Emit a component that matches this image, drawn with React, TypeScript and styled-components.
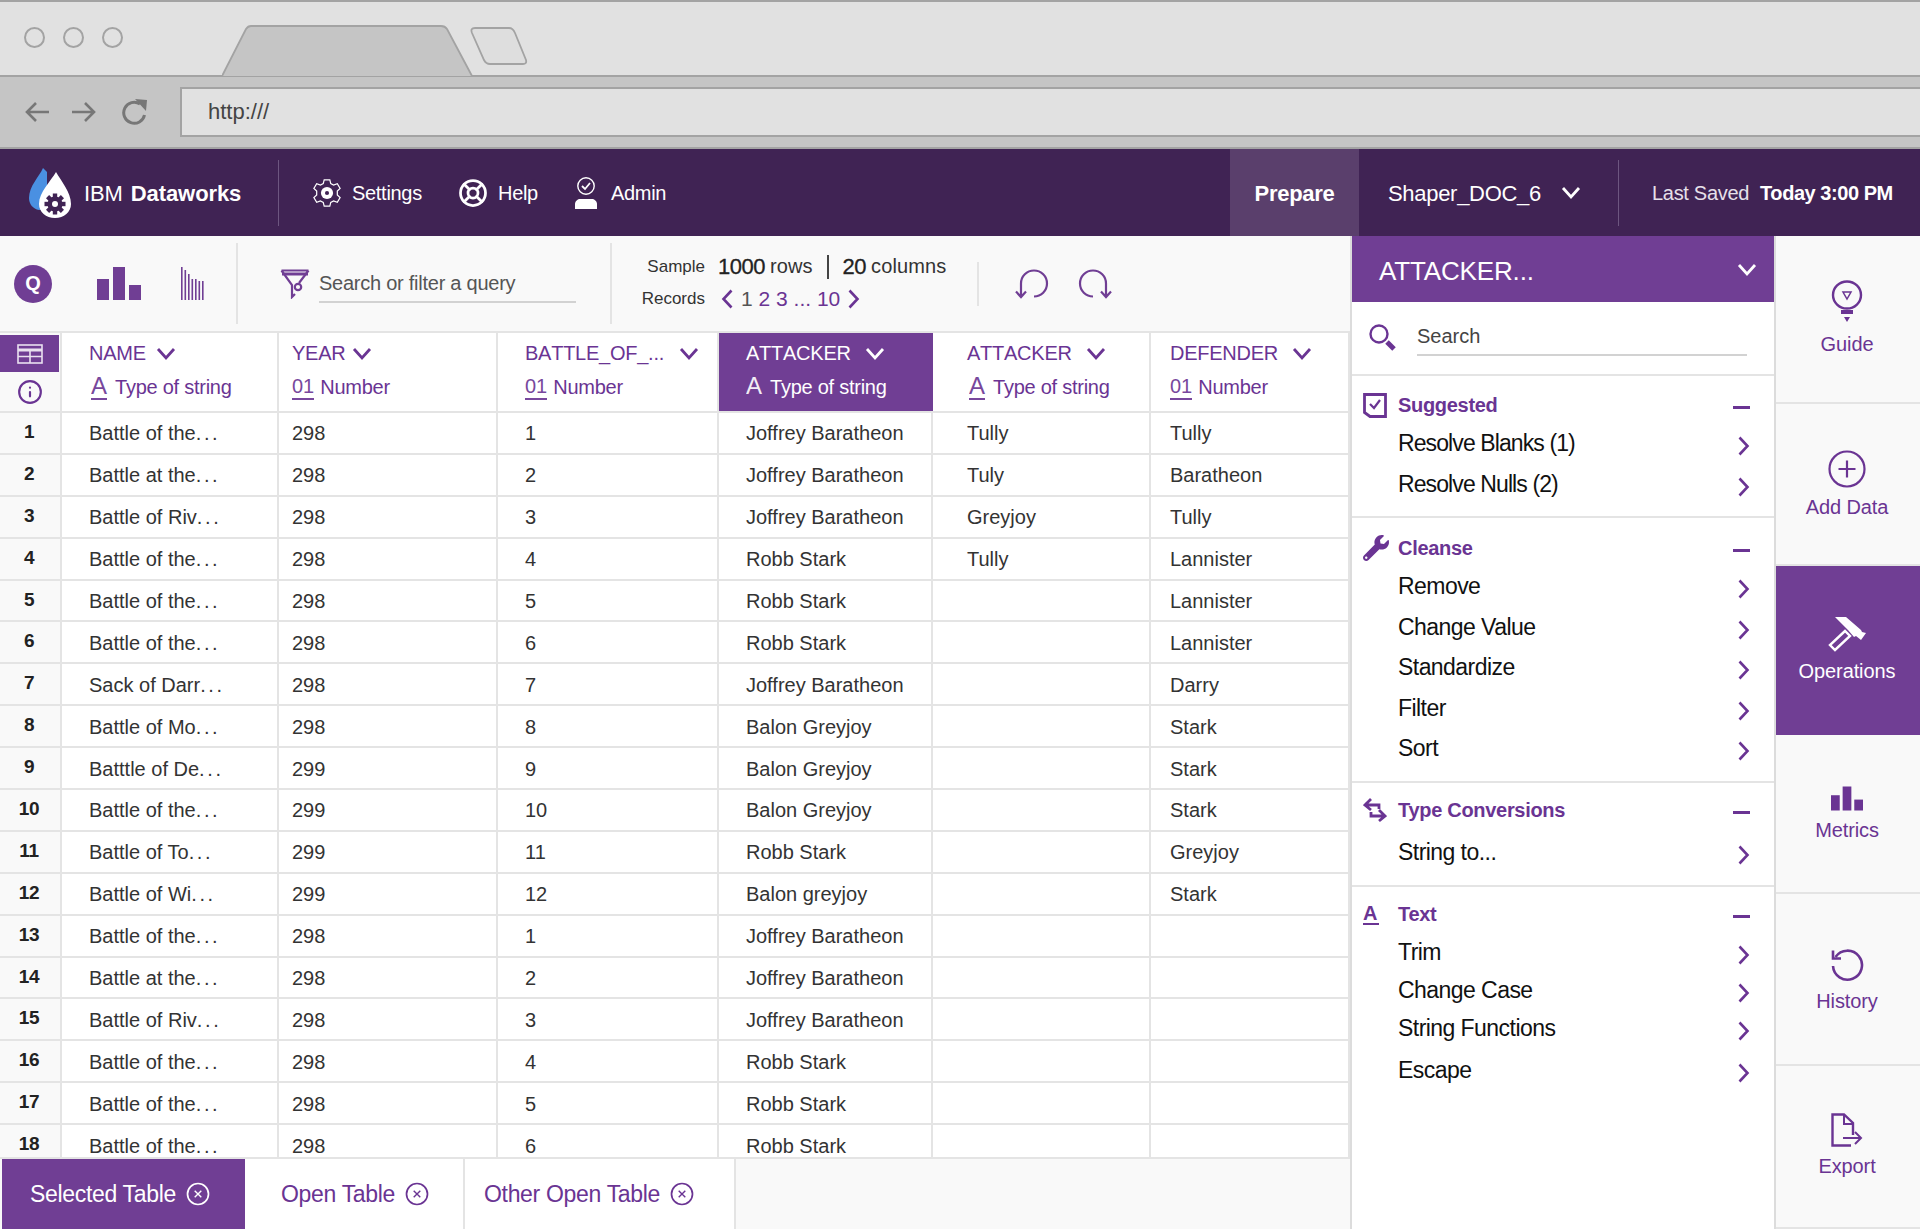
import React from 'react';
import styled, { createGlobalStyle } from 'styled-components';
import { Info, LifeBuoy } from 'lucide-react';
import { FaWrench } from 'react-icons/fa';

const PURPLE = '#703e94';
const INK = '#6a3493';
const LINE = '#e4e4e4';

const GlobalStyle = createGlobalStyle`
    html, body {
        margin: 0;
        padding: 0;
        background: #fff;
    }
    * {
        box-sizing: border-box;
    }
    #root {
        font-family: "Liberation Sans", Arial, sans-serif;
    }
`;

const Page = styled.div`
    width: 1920px;
    height: 1229px;
    display: flex;
    flex-direction: column;
    overflow: hidden;
`;

/* browser chrome */
const TabStrip = styled.div`
    height: 77px;
    flex: none;
    display: flex;
    align-items: flex-end;
    background: #e1e1e1;
    border-top: 2px solid #a3a3a3;
    border-bottom: 2px solid #a3a3a3;
`;

const Lights = styled.div`
    display: flex;
    gap: 18px;
    padding: 0 0 27px 24px;
    width: 222px;
`;

const Light = styled.span`
    width: 21px;
    height: 21px;
    border-radius: 50%;
    border: 2px solid #a3a3a3;
`;

const AddressBar = styled.div`
    height: 72px;
    flex: none;
    display: flex;
    align-items: center;
    background: #c5c5c5;
    border-bottom: 2px solid #a3a3a3;
    color: #777;
`;

const NavIcons = styled.div`
    width: 180px;
    padding: 0 0 0 25px;
    display: flex;
    gap: 23px;
    align-items: center;
`;

const UrlField = styled.div`
    flex: 1;
    height: 50px;
    padding-left: 26px;
    display: flex;
    align-items: center;
    background: #e1e1e1;
    border: 2px solid #a3a3a3;
    border-right: none;
    color: #444;
    font-size: 22px;
`;

/* app header */
const Header = styled.header`
    height: 87px;
    flex: none;
    display: flex;
    align-items: center;
    background: #402354;
    color: #fff;
    font-size: 20px;
    letter-spacing: -0.3px;
`;

const HeaderLabel = styled.span`
    padding-top: 2px;
`;

const Brand = styled.div`
    width: 278px;
    padding-left: 28px;
    display: flex;
    align-items: center;
    gap: 12px;
    font-size: 22px;
    letter-spacing: -0.1px;
    b {
        margin-left: 2px;
    }
`;

const VRule = styled.span`
    align-self: center;
    width: 1px;
    height: 66px;
    background: #6d5680;
`;

const NavItem = styled.div<{ $w: number; $gap: number }>`
    width: ${(p) => p.$w}px;
    display: flex;
    align-items: center;
    gap: ${(p) => p.$gap}px;
`;

const NavGroup = styled.nav`
    display: flex;
    padding-left: 33px;
    flex: 1;
`;

const Prepare = styled.div`
    width: 129px;
    align-self: stretch;
    padding-top: 2px;
    display: flex;
    align-items: center;
    justify-content: center;
    background: #5a3f6c;
    font-weight: bold;
    font-size: 22px;
`;

const DocName = styled.div`
    width: 259px;
    padding-left: 29px;
    display: flex;
    align-items: center;
    gap: 20px;
    font-size: 22px;
`;

const Saved = styled.div`
    width: 301px;
    padding: 2px 0 0 33px;
    display: flex;
    gap: 11px;
    color: #e6e0ea;
    b {
        color: #fff;
        letter-spacing: -0.45px;
    }
`;

/* body */
const Body = styled.div`
    flex: 1;
    min-height: 0;
    display: flex;
`;

const Main = styled.main`
    width: 1352px;
    display: flex;
    flex-direction: column;
    border-right: 2px solid #dcdcdc;
`;

const Toolbar = styled.div`
    height: 97px;
    flex: none;
    display: flex;
    align-items: center;
    background: #f9f9f9;
    border-bottom: 2px solid ${LINE};
`;

const ViewIcons = styled.div`
    width: 238px;
    height: 81px;
    padding-left: 14px;
    display: flex;
    align-items: center;
    border-right: 2px solid ${LINE};
`;

const QBadge = styled.span`
    width: 38px;
    height: 38px;
    border-radius: 50%;
    display: flex;
    align-items: center;
    justify-content: center;
    background: ${PURPLE};
    color: #fff;
    font-weight: bold;
    font-size: 20px;
    margin-right: 45px;
`;

const QueryBox = styled.div`
    width: 374px;
    height: 81px;
    padding: 0 34px 0 42px;
    display: flex;
    align-items: center;
    gap: 9px;
    border-right: 2px solid ${LINE};
`;

const QueryText = styled.div`
    flex: 1;
    height: 36px;
    padding-top: 5px;
    margin-top: 3px;
    border-bottom: 2px solid #d2d2d2;
    color: #555;
    font-size: 20px;
    letter-spacing: -0.25px;
`;

const Stats = styled.div`
    width: 365px;
    padding-left: 29px;
    margin-top: -2px;
    display: flex;
    flex-direction: column;
    gap: 8px;
    color: #333;
`;

const StatRow = styled.div`
    display: flex;
    align-items: center;
    height: 24px;
    font-size: 20px;
    letter-spacing: 0.1px;
    white-space: pre;
`;

const StatLabel = styled.span`
    width: 64px;
    margin-right: 13px;
    text-align: right;
    font-size: 17px;
    letter-spacing: 0;
`;

const Strong = styled.span`
    font-size: 22px;
    color: #222;
    margin-right: 5px;
    letter-spacing: -0.5px;
    -webkit-text-stroke: 0.3px #222;
`;

const Sep = styled.span`
    width: 2px;
    height: 24px;
    margin: 0 14px;
    background: #444;
`;

const PagerNav = styled.span`
    margin-left: 3px;
    display: flex;
    align-items: center;
`;

const Pager = styled.span`
    margin: 0 7px;
    color: ${INK};
    font-size: 21px;
    letter-spacing: 0;
    i {
        font-style: normal;
        color: #555;
    }
`;

const HistoryIcons = styled.div`
    height: 44px;
    padding-left: 35px;
    display: flex;
    align-items: center;
    gap: 27px;
    border-left: 2px solid ${LINE};
`;

/* data grid */
const GridArea = styled.div`
    flex: 1;
    min-height: 0;
    overflow: hidden;
`;

const COLS = '62px 217px 219px 221px 214px 218px 1fr';

const HeadRow = styled.div`
    height: 80px;
    display: grid;
    grid-template-columns: ${COLS};
    border-bottom: 2px solid ${LINE};
`;

const CornerCell = styled.div`
    display: flex;
    flex-direction: column;
    background: #f9f9f9;
    border-right: 2px solid ${LINE};
`;

const CornerTop = styled.div`
    width: 59px;
    height: 37px;
    margin-top: 2px;
    display: flex;
    align-items: center;
    justify-content: center;
    background: ${PURPLE};
`;

const CornerInfo = styled.div`
    flex: 1;
    display: flex;
    align-items: center;
    justify-content: center;
    color: ${INK};
`;

const HeadCell = styled.div<{ $on?: boolean; $x: number }>`
    padding: 8px 0 0 ${(p) => p.$x}px;
    background: ${(p) => (p.$on ? PURPLE : '#fff')};
    color: ${(p) => (p.$on ? '#fff' : INK)};
    border-right: ${(p) => (p.$on ? 'none' : `2px solid ${LINE}`)};
`;

const HeadTitle = styled.div<{ $gap: number }>`
    height: 24px;
    display: flex;
    align-items: center;
    gap: ${(p) => p.$gap}px;
    font-size: 20px;
    font-kerning: none;
    letter-spacing: -0.25px;
    white-space: nowrap;
`;

const HeadType = styled.div`
    height: 30px;
    margin-top: 7px;
    display: flex;
    align-items: center;
    font-size: 20px;
    letter-spacing: -0.25px;
    white-space: nowrap;
`;

const TypeMark = styled.span<{ $plain?: boolean; $letter?: boolean }>`
    margin: 0 ${(p) => (p.$letter ? 8 : 6)}px 0 ${(p) => (p.$letter && !p.$plain ? 2 : 0)}px;
    font-size: ${(p) => (p.$letter ? 24 : 20)}px;
    line-height: 24px;
    letter-spacing: 0;
    opacity: 0.9;
    border-bottom: 2px solid ${(p) => (p.$plain ? 'transparent' : 'currentColor')};
`;

const TextMark = styled.span`
    display: block;
    width: 16px;
    border-bottom: 2px solid ${INK};
    color: ${INK};
    font-size: 20px;
    font-weight: bold;
    line-height: 20px;
`;

const Row = styled.div`
    height: 41.9px;
    display: grid;
    grid-template-columns: ${COLS};
    border-bottom: 2px solid ${LINE};
`;

const RowNum = styled.div`
    padding: 0 2px 2px 0;
    display: flex;
    align-items: center;
    justify-content: center;
    background: #f9f9f9;
    border-right: 2px solid ${LINE};
    color: #222;
    font-weight: bold;
    font-size: 19px;
    letter-spacing: -0.4px;
`;

const Cell = styled.div<{ $x: number }>`
    padding: 2px 0 0 ${(p) => p.$x}px;
    display: flex;
    align-items: center;
    border-right: 2px solid ${LINE};
    color: #333;
    font-size: 20px;
    white-space: pre;
    overflow: hidden;
`;

const Dots = styled.span`
    letter-spacing: 2.6px;
`;

/* bottom tabs */
const TabsBar = styled.div`
    height: 72px;
    flex: none;
    display: flex;
    background: #f9f9f9;
    border-top: 2px solid ${LINE};
`;

const TableTab = styled.div<{ $w: number; $x: number; $on?: boolean }>`
    width: ${(p) => p.$w}px;
    padding-left: ${(p) => p.$x}px;
    display: flex;
    align-items: center;
    gap: 10px;
    background: ${(p) => (p.$on ? PURPLE : '#fff')};
    color: ${(p) => (p.$on ? '#fff' : INK)};
    border-right: ${(p) => (p.$on ? 'none' : `2px solid ${LINE}`)};
    font-size: 23px;
    letter-spacing: -0.32px;
    margin-left: ${(p) => (p.$on ? '2px' : '0')};
`;

/* operations panel */
const Panel = styled.aside`
    width: 424px;
    flex: none;
    display: flex;
    flex-direction: column;
    background: #fff;
    border-right: 2px solid #dcdcdc;
`;

const PanelHead = styled.div`
    height: 66px;
    flex: none;
    padding: 0 17px 0 27px;
    display: flex;
    align-items: center;
    justify-content: space-between;
    background: ${PURPLE};
    color: #fff;
    font-size: 26px;
    letter-spacing: -0.15px;
`;

const PanelTitle = styled.span`
    margin-top: 5px;
`;

const PanelSearch = styled.div`
    height: 74px;
    flex: none;
    padding: 0 27px 0 17px;
    display: flex;
    align-items: center;
    gap: 21px;
    border-bottom: 2px solid ${LINE};
    color: ${INK};
`;

const PanelSearchText = styled.div`
    flex: 1;
    height: 36px;
    padding-top: 5px;
    border-bottom: 2px solid #d2d2d2;
    color: #444;
    font-size: 20px;
`;

const Section = styled.section<{ $top: number; $gap: number; $line?: boolean }>`
    padding: ${(p) => p.$top}px 0 12px 0;
    border-bottom: ${(p) => (p.$line ? `2px solid ${LINE}` : 'none')};
    & > div:nth-child(2) {
        margin-top: ${(p) => p.$gap}px;
    }
`;

const SectionHead = styled.div`
    height: 30px;
    padding: 0 24px 0 11px;
    display: flex;
    align-items: center;
    color: ${INK};
    font-weight: bold;
    font-size: 20px;
    letter-spacing: -0.3px;
`;

const SectionIcon = styled.span`
    width: 35px;
    display: flex;
    align-items: center;
`;

const SectionName = styled.span`
    flex: 1;
`;

const Minus = styled.span`
    width: 17px;
    height: 3px;
    margin-top: 4px;
    background: ${INK};
`;

const Item = styled.div<{ $h: number; $tight?: boolean }>`
    height: ${(p) => p.$h}px;
    padding: 0 24px 0 46px;
    display: flex;
    align-items: center;
    justify-content: space-between;
    color: #111;
    font-size: 23px;
    letter-spacing: ${(p) => (p.$tight ? -0.9 : -0.55)}px;
    svg {
        margin-top: 5px;
    }
`;

/* right rail */
const Rail = styled.nav`
    flex: 1;
    display: flex;
    flex-direction: column;
    background: #f9f9f9;
`;

const RailItem = styled.div<{ $h: number; $pad: number; $gap: number; $on?: boolean }>`
    height: ${(p) => p.$h}px;
    flex: none;
    padding: ${(p) => p.$pad}px 2px 0 0;
    display: flex;
    flex-direction: column;
    align-items: center;
    gap: ${(p) => p.$gap}px;
    background: ${(p) => (p.$on ? PURPLE : 'transparent')};
    color: ${(p) => (p.$on ? '#fff' : INK)};
    border-bottom: 2px solid ${(p) => (p.$on ? PURPLE : LINE)};
    font-size: 20px;
    letter-spacing: -0.1px;
`;

function ChevronDown({ color = 'currentColor' }: { color?: string }) {
    return (
        <svg width="20" height="15" viewBox="0 0 20 15" fill="none" stroke={color} strokeWidth="2.8" style={{ flex: 'none' }}>
            <path d="M2 3l8 9 8-9" />
        </svg>
    );
}

function ChevronSide({ dir, color = INK }: { dir: 'left' | 'right'; color?: string }) {
    return (
        <svg width="13" height="20" viewBox="0 0 13 20" fill="none" stroke={color} strokeWidth="2.6" style={{ flex: 'none' }}>
            <path d={dir === 'right' ? 'M2.5 1.5l8 8.5-8 8.5' : 'M10.5 1.5l-8 8.5 8 8.5'} />
        </svg>
    );
}

function BarsIcon({ w = 44, h = 33, color = PURPLE }: { w?: number; h?: number; color?: string }) {
    return (
        <svg width={w} height={h} viewBox="0 0 44 33" fill={color}>
            <rect x="0" y="12" width="12" height="21" />
            <rect x="16" y="0" width="12" height="33" />
            <rect x="32" y="18" width="12" height="15" />
        </svg>
    );
}

function ThinBars() {
    return (
        <svg width="24" height="33" viewBox="0 0 24 33" fill={PURPLE} style={{ marginLeft: 40 }}>
            {[[0, 0], [3.5, 3], [7, 7], [10.5, 12], [14, 12], [17.5, 14], [21, 14]].map(([x, y]) => (
                <rect key={x} x={x} y={y} width="1.6" height={33 - y} />
            ))}
        </svg>
    );
}

function FunnelIcon() {
    return (
        <svg width="30" height="30" viewBox="0 0 30 30" fill="none" stroke={PURPLE} strokeWidth="2.2" style={{ flex: 'none' }}>
            <path d="M1.5 1.5h27M1.5 1.5L12 16v12l3-3M28.5 1.5L19 14" />
            <path d="M2 5h26" strokeWidth="3" />
            <circle cx="18" cy="18" r="3.2" />
        </svg>
    );
}

function TurnIcon({ flip }: { flip?: boolean }) {
    return (
        <svg width="36" height="32" viewBox="0 0 36 32" fill="none" stroke={PURPLE} strokeWidth="2.2" style={flip ? { transform: 'scaleX(-1)' } : undefined}>
            <path d="M20 28.5A13 13 0 1 0 7 15.5V29M2 23.5L7 29l5-5.5" />
        </svg>
    );
}

function ArrowIcon({ flip }: { flip?: boolean }) {
    return (
        <svg width="24" height="22" viewBox="0 0 24 22" fill="none" stroke="#777" strokeWidth="2.6" style={flip ? { transform: 'scaleX(-1)' } : undefined}>
            <path d="M24 11H3M11 2l-9 9 9 9" />
        </svg>
    );
}

function ReloadIcon() {
    return (
        <svg width="26" height="26" viewBox="0 0 26 26" fill="none" stroke="#777" strokeWidth="3" style={{ marginLeft: 3 }}>
            <path d="M22.5 16A10.5 10.5 0 1 1 18 5" />
            <path d="M13 0l12 1-1 11z" fill="#777" stroke="none" />
        </svg>
    );
}

function LogoIcon() {
    return (
        <svg width="44" height="50" viewBox="0 0 44 50">
            <path d="M15 0C11 9 1 18 1 30c0 6 4 11 10 12 4 0 8-4 8-8V4z" fill="#4a90e2" />
            <path d="M28 4c-5 9-17 20-17 32 0 8 7 14 16 14s16-6 16-14C43 24 33 13 28 4z" fill="#fff" />
            <g fill="#402354">
                <circle cx="27" cy="36" r="7.5" />
                {[0, 45, 90, 135].map((a) => (
                    <rect key={a} x="24.8" y="25.5" width="4.4" height="21" transform={`rotate(${a} 27 36)`} />
                ))}
            </g>
            <circle cx="27" cy="36" r="3" fill="#fff" />
        </svg>
    );
}

function GearIcon() {
    return (
        <svg width="30" height="32" viewBox="0 0 32 32" fill="none" stroke="#fff" strokeWidth="1.3">
            <path d="M13 2h6l1 4 3 1.5 4-1.5 3 5-3 3v4l3 3-3 5-4-1.5-3 1.5-1 4h-6l-1-4-3-1.5-4 1.5-3-5 3-3v-4l-3-3 3-5 4 1.5L12 6z" />
            <circle cx="16" cy="16" r="6.5" fill="#fff" stroke="none" />
            <circle cx="16" cy="16" r="2.2" fill="#402354" stroke="none" />
        </svg>
    );
}

function AdminIcon() {
    return (
        <svg width="26" height="32" viewBox="0 0 26 32" fill="none" stroke="#fff" strokeWidth="1.4">
            <circle cx="13" cy="9" r="8.2" />
            <path d="M9 9l3 3 5-6" strokeWidth="1.8" />
            <path d="M2 32v-5c0-3 3-5 5-5h12c2 0 5 2 5 5v5z" fill="#fff" stroke="none" />
        </svg>
    );
}

function GridIcon() {
    return (
        <svg width="26" height="20" viewBox="0 0 26 20" fill="none" stroke="#e9e0ef" strokeWidth="1.6">
            <rect x="1" y="1" width="24" height="18" />
            <path d="M1 6h24" strokeWidth="3" />
            <path d="M1 12.5h24M13 6v13" />
        </svg>
    );
}

function SmallClose({ color }: { color: string }) {
    return (
        <svg width="24" height="24" viewBox="0 0 24 24" fill="none" stroke={color} strokeWidth="1.7" style={{ flex: 'none' }}>
            <circle cx="12" cy="12" r="10.5" />
            <path d="M8.7 8.7l6.6 6.6M15.3 8.7l-6.6 6.6" strokeWidth="1.4" />
        </svg>
    );
}

function LensIcon() {
    return (
        <svg width="27" height="28" viewBox="0 0 27 28" fill="none" stroke={INK} strokeWidth="2.4" style={{ flex: 'none' }}>
            <circle cx="10" cy="10" r="8.5" />
            <path d="M18 18l7 7" strokeWidth="5" />
        </svg>
    );
}

function CheckBoxIcon() {
    return (
        <svg width="24" height="25" viewBox="0 0 24 25" fill="none" stroke={INK} strokeWidth="2.8">
            <path d="M1.5 1.5h21v22H7l-5.5-4z" />
            <path d="M7 11l4 4 6-8" strokeWidth="2.2" />
        </svg>
    );
}

function SwapIcon() {
    return (
        <svg width="24" height="26" viewBox="0 0 24 26" fill="none" stroke={INK} strokeWidth="2.8">
            <path d="M8 2L2 8l6 5M2 8h14v4" />
            <path d="M16 13l6 6-6 5M22 19H8v-4" />
        </svg>
    );
}

function BulbIcon() {
    return (
        <svg width="32" height="43" viewBox="0 0 32 43" fill="none" stroke={INK} strokeWidth="2.4">
            <ellipse cx="16" cy="15" rx="14" ry="13.5" />
            <path d="M12 12h8l-4 7z" strokeWidth="1.5" />
            <path d="M10 30h12v4H10zM13 37h6l-3 5z" fill={INK} stroke="none" />
        </svg>
    );
}

function PlusCircleIcon() {
    return (
        <svg width="38" height="38" viewBox="0 0 38 38" fill="none" stroke={INK} strokeWidth="2.2">
            <circle cx="19" cy="19" r="17.5" />
            <path d="M19 10.5v17M10.5 19h17" />
        </svg>
    );
}

function HammerIcon() {
    return (
        <svg width="38" height="35" viewBox="0 0 38 35" fill="none">
            <path d="M6 0h11l15 13 1 2 4 1-5 7-5-4-2 1-6-7z" transform="translate(1 0)" fill="#fff" />
            <path d="M17 14L2 28l5 5 15-14z" stroke="#fff" strokeWidth="2.4" />
        </svg>
    );
}

function HistoryIcon() {
    return (
        <svg width="34" height="34" viewBox="0 0 34 34" fill="none" stroke={INK} strokeWidth="2.6">
            <path d="M5.5 9A14.5 14.5 0 1 1 3 18" />
            <path d="M3 2.5v8h8" />
        </svg>
    );
}

function ExportIcon() {
    return (
        <svg width="32" height="34" viewBox="0 0 32 34" fill="none" stroke={INK} strokeWidth="2.4">
            <path d="M22 22V10L13 1.5H1.5v31H20" />
            <path d="M13 1.5V11h9" strokeWidth="2" />
            <path d="M12 25h17M24 19l6 6-6 6" strokeWidth="2" />
        </svg>
    );
}

const columns = [
    { name: 'NAME', type: 'A', sub: 'Type of string', x: 27, gap: 10 },
    { name: 'YEAR', type: '01', sub: 'Number', x: 13, gap: 7 },
    { name: 'BATTLE_OF_...', type: '01', sub: 'Number', x: 27, gap: 15 },
    { name: 'ATTACKER', type: 'A', sub: 'Type of string', x: 27, gap: 14, on: true },
    { name: 'ATTACKER', type: 'A', sub: 'Type of string', x: 34, gap: 14 },
    { name: 'DEFENDER', type: '01', sub: 'Number', x: 19, gap: 14 },
];

const rows = [
    ['Battle of the...', '298', '1', 'Joffrey Baratheon', 'Tully', 'Tully'],
    ['Battle at the...', '298', '2', 'Joffrey Baratheon', 'Tuly', 'Baratheon'],
    ['Battle of Riv...', '298', '3', 'Joffrey Baratheon', 'Greyjoy', 'Tully'],
    ['Battle of the...', '298', '4', 'Robb Stark', 'Tully', 'Lannister'],
    ['Battle of the...', '298', '5', 'Robb Stark', '', 'Lannister'],
    ['Battle of the...', '298', '6', 'Robb Stark', '', 'Lannister'],
    ['Sack of Darr...', '298', '7', 'Joffrey Baratheon', '', 'Darry'],
    ['Battle of Mo...', '298', '8', 'Balon Greyjoy', '', 'Stark'],
    ['Batttle of De...', '299', '9', 'Balon Greyjoy', '', 'Stark'],
    ['Battle of the...', '299', '10', 'Balon Greyjoy', '', 'Stark'],
    ['Battle of To...', '299', '11', 'Robb Stark', '', 'Greyjoy'],
    ['Battle of Wi...', '299', '12', 'Balon greyjoy', '', 'Stark'],
    ['Battle of the...', '298', '1', 'Joffrey Baratheon', '', ''],
    ['Battle at the...', '298', '2', 'Joffrey Baratheon', '', ''],
    ['Battle of Riv...', '298', '3', 'Joffrey Baratheon', '', ''],
    ['Battle of the...', '298', '4', 'Robb Stark', '', ''],
    ['Battle of the...', '298', '5', 'Robb Stark', '', ''],
    ['Battle of the...', '298', '6', 'Robb Stark', '', ''],
];

const sections = [
    { name: 'Suggested', icon: <CheckBoxIcon />, top: 14, gap: 3, line: true, items: [['Resolve Blanks (1)', 41], ['Resolve Nulls (2)', 40]] },
    { name: 'Cleanse', icon: <FaWrench size={26} color={INK} />, top: 15, gap: 3, line: true, items: [['Remove', 41], ['Change Value', 40], ['Standardize', 41], ['Filter', 40], ['Sort', 41]] },
    { name: 'Type Conversions', icon: <SwapIcon />, top: 12, gap: 7, line: true, items: [['String to...', 41]] },
    { name: 'Text', icon: <TextMark>A</TextMark>, top: 12, gap: 4, line: false, items: [['Trim', 38], ['Change Case', 38], ['String Functions', 39], ['Escape', 45]] },
];

const railItems = [
    { name: 'Guide', icon: <BulbIcon />, h: 168, pad: 44, gap: 10 },
    { name: 'Add Data', icon: <PlusCircleIcon />, h: 162, pad: 46, gap: 8 },
    { name: 'Operations', icon: <HammerIcon />, h: 169, pad: 51, gap: 8, on: true },
    { name: 'Metrics', icon: <BarsIcon w={32} h={25} color={INK} />, h: 159, pad: 51, gap: 8 },
    { name: 'History', icon: <HistoryIcon />, h: 172, pad: 54, gap: 8 },
    { name: 'Export', icon: <ExportIcon />, h: 163, pad: 47, gap: 8 },
];

function CellText({ value }: { value: string }) {
    if (!value.endsWith('...')) return <>{value}</>;
    return <>{value.slice(0, -3)}<Dots>...</Dots></>;
}

export default function App() {
    return (
        <Page>
            <GlobalStyle />
            <TabStrip>
                <Lights>
                    <Light />
                    <Light />
                    <Light />
                </Lights>
                <svg width="306" height="52" viewBox="0 0 306 52" fill="none" stroke="#a3a3a3" strokeWidth="1.8" style={{ marginBottom: -2 }}>
                    <path d="M0 51L24 4q2-3 5-3h190q4 0 6 3l25 47z" fill="#c5c5c5" stroke="none" />
                    <path d="M0 51L24 4q2-3 5-3h190q4 0 6 3l25 47" />
                    <path d="M250 8q-2-5 3-5h34q4 0 6 5l11 27q1 4-3 4h-33q-4 0-6-4z" fill="#dedede" />
                </svg>
            </TabStrip>
            <AddressBar>
                <NavIcons>
                    <ArrowIcon />
                    <ArrowIcon flip />
                    <ReloadIcon />
                </NavIcons>
                <UrlField>http:///</UrlField>
            </AddressBar>
            <Header>
                <Brand>
                    <LogoIcon />
                    <HeaderLabel>IBM <b>Dataworks</b></HeaderLabel>
                </Brand>
                <VRule />
                <NavGroup>
                    <NavItem $w={146} $gap={10}><GearIcon /><HeaderLabel>Settings</HeaderLabel></NavItem>
                    <NavItem $w={115} $gap={10}><LifeBuoy size={30} strokeWidth={2.2} /><HeaderLabel>Help</HeaderLabel></NavItem>
                    <NavItem $w={200} $gap={12}><AdminIcon /><HeaderLabel>Admin</HeaderLabel></NavItem>
                </NavGroup>
                <Prepare>Prepare</Prepare>
                <DocName><HeaderLabel>Shaper_DOC_6</HeaderLabel><ChevronDown color="#fff" /></DocName>
                <VRule />
                <Saved>Last Saved <b>Today 3:00 PM</b></Saved>
            </Header>
            <Body>
                <Main>
                    <Toolbar>
                        <ViewIcons>
                            <QBadge>Q</QBadge>
                            <BarsIcon />
                            <ThinBars />
                        </ViewIcons>
                        <QueryBox>
                            <FunnelIcon />
                            <QueryText>Search or filter a query</QueryText>
                        </QueryBox>
                        <Stats>
                            <StatRow>
                                <StatLabel>Sample</StatLabel>
                                <Strong>1000</Strong>rows
                                <Sep />
                                <Strong>20</Strong>columns
                            </StatRow>
                            <StatRow>
                                <StatLabel>Records</StatLabel>
                                <PagerNav>
                                    <ChevronSide dir="left" />
                                    <Pager><i>1</i> 2 3 ... 10</Pager>
                                    <ChevronSide dir="right" />
                                </PagerNav>
                            </StatRow>
                        </Stats>
                        <HistoryIcons>
                            <TurnIcon />
                            <TurnIcon flip />
                        </HistoryIcons>
                    </Toolbar>
                    <GridArea>
                        <HeadRow>
                            <CornerCell>
                                <CornerTop><GridIcon /></CornerTop>
                                <CornerInfo><Info size={26} strokeWidth={2} /></CornerInfo>
                            </CornerCell>
                            {columns.map((col, i) => (
                                <HeadCell key={i} $on={col.on} $x={col.x}>
                                    <HeadTitle $gap={col.gap}>{col.name}<ChevronDown /></HeadTitle>
                                    <HeadType>
                                        <TypeMark $plain={col.on} $letter={col.type === 'A'}>{col.type}</TypeMark>
                                        {col.sub}
                                    </HeadType>
                                </HeadCell>
                            ))}
                        </HeadRow>
                        {rows.map((row, i) => (
                            <Row key={i}>
                                <RowNum>{i + 1}</RowNum>
                                {row.map((value, j) => (
                                    <Cell key={j} $x={columns[j].x}><CellText value={value} /></Cell>
                                ))}
                            </Row>
                        ))}
                    </GridArea>
                    <TabsBar>
                        <TableTab $w={243} $x={28} $on>Selected Table<SmallClose color="#fff" /></TableTab>
                        <TableTab $w={220} $x={36}>Open Table<SmallClose color={INK} /></TableTab>
                        <TableTab $w={271} $x={19}>Other Open Table<SmallClose color={INK} /></TableTab>
                    </TabsBar>
                </Main>
                <Panel>
                    <PanelHead><PanelTitle>ATTACKER...</PanelTitle><ChevronDown color="#fff" /></PanelHead>
                    <PanelSearch>
                        <LensIcon />
                        <PanelSearchText>Search</PanelSearchText>
                    </PanelSearch>
                    {sections.map((section) => (
                        <Section key={section.name} $top={section.top} $gap={section.gap} $line={section.line}>
                            <SectionHead>
                                <SectionIcon>{section.icon}</SectionIcon>
                                <SectionName>{section.name}</SectionName>
                                <Minus />
                            </SectionHead>
                            {section.items.map(([label, h]) => (
                                <Item key={label} $h={h as number} $tight={String(label).startsWith('Resolve')}>
                                    {label}
                                    <ChevronSide dir="right" />
                                </Item>
                            ))}
                        </Section>
                    ))}
                </Panel>
                <Rail>
                    {railItems.map((item) => (
                        <RailItem key={item.name} $h={item.h} $pad={item.pad} $gap={item.gap} $on={item.on}>
                            {item.icon}
                            {item.name}
                        </RailItem>
                    ))}
                </Rail>
            </Body>
        </Page>
    );
}
